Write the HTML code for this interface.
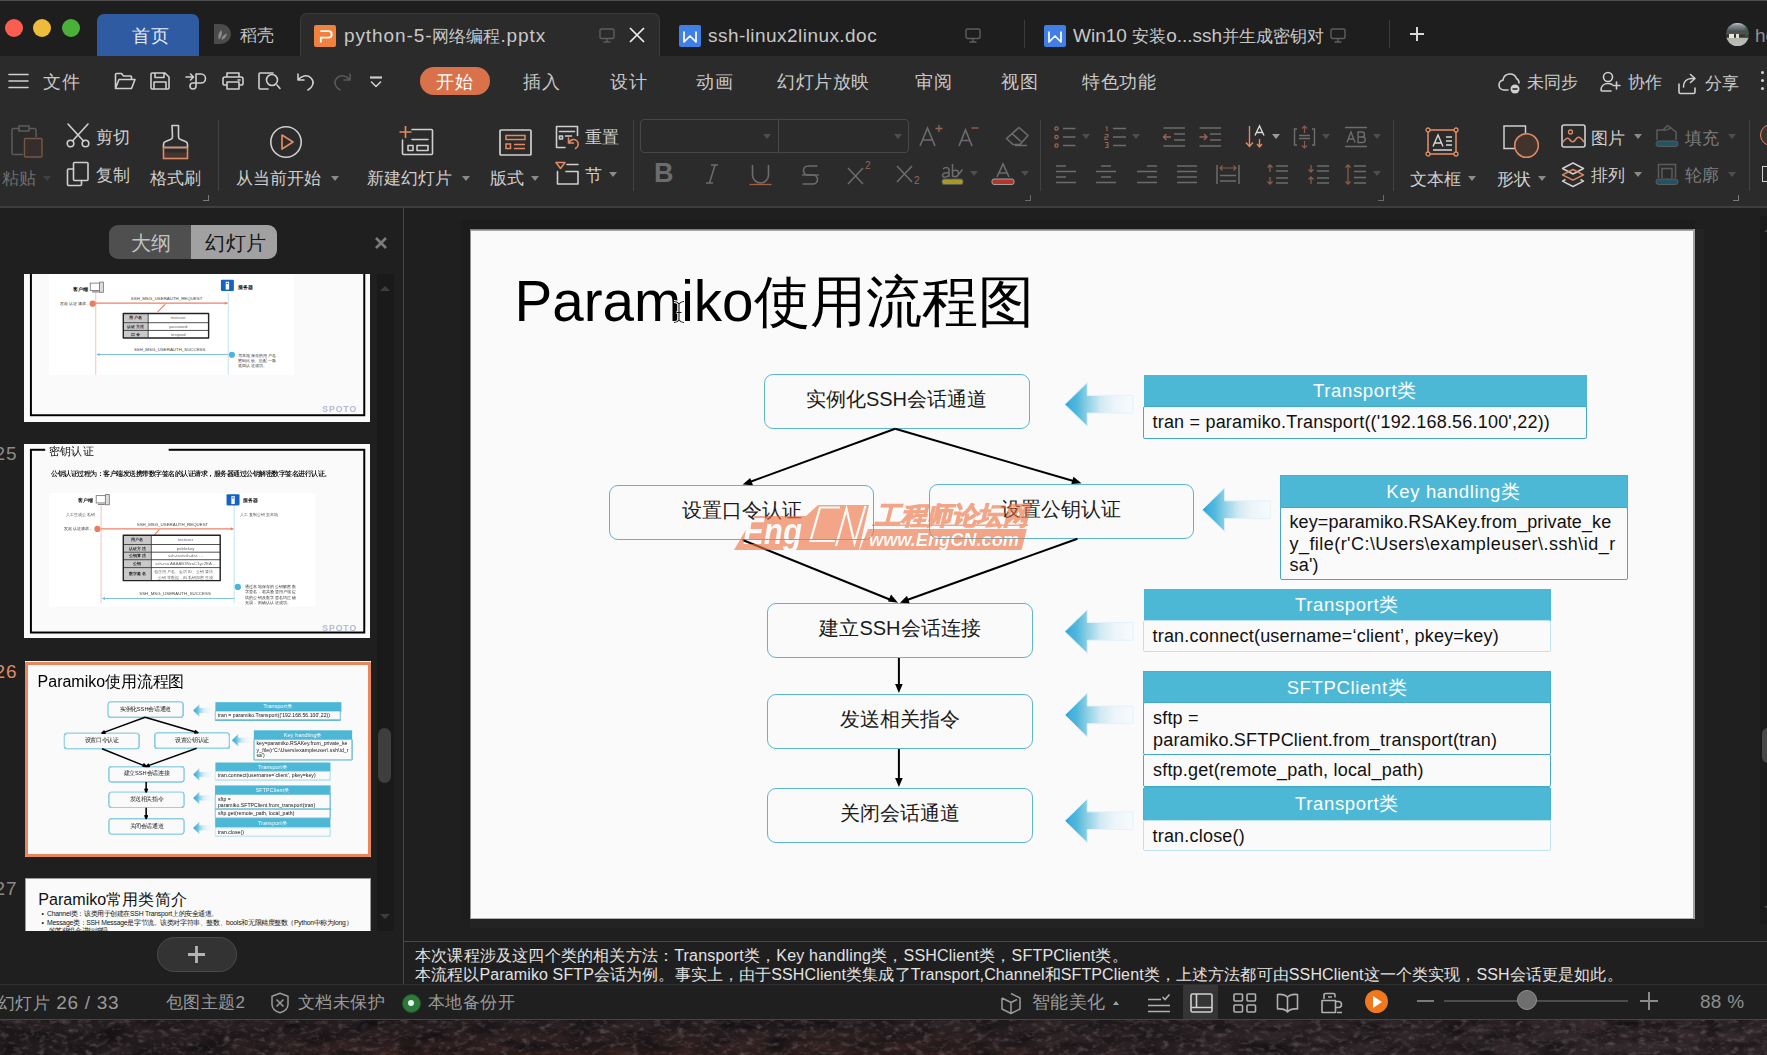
<!DOCTYPE html>
<html lang="zh">
<head>
<meta charset="utf-8">
<title>python-5-网络编程.pptx</title>
<style>
*{box-sizing:border-box;margin:0;padding:0}
html,body{width:1767px;height:1055px;overflow:hidden;background:#1f1f1f}
body{font-family:"Liberation Sans",sans-serif;color:#cfcfcf;position:relative}
.a{position:absolute}
.t{position:absolute;white-space:nowrap;line-height:1}
svg{position:absolute;overflow:visible}
.ic{fill:none;stroke:#cfcfcf;stroke-width:1.6;stroke-linecap:round;stroke-linejoin:round}
.dim{stroke:#585858}
.or{stroke:#e08a63}
/* ---------- tab bar ---------- */
#tabbar{left:0;top:0;width:1767px;height:56px;background:#1e1e1e}
#topline{left:0;top:0;width:1767px;height:1px;background:#4c4c4c}
.tl{width:18px;height:18px;border-radius:50%;top:19px}
#hometab{left:97px;top:14px;width:102px;height:42px;background:#2f5ba2;border-radius:7px 7px 0 0}
#doctab{left:300px;top:13px;width:360px;height:44px;background:#2b2b2b;border:1px solid #3b3b3b;border-bottom:none;border-radius:7px 7px 0 0}
.tabtxt{font-size:17px;color:#c8c8c8;top:27px}
.tabtxt b{font-weight:normal;font-size:19px;line-height:17px}
.vsep{width:1px;background:#3c3c3c}
/* ---------- menu bar ---------- */
#menubar{left:0;top:56px;width:1767px;height:52px;background:#2b2b2b}
.mi{font-size:18px;color:#c9c9c9;top:72.5px;letter-spacing:.5px}
#startpill{left:420px;top:67px;width:70px;height:28px;border-radius:14px;background:#d9724b}
/* ---------- ribbon ---------- */
#ribbon{left:0;top:108px;width:1767px;height:98px;background:#2b2b2b}
#ribline{left:0;top:206px;width:1767px;height:2px;background:#3e3e3e}
.rt{font-size:18.5px;color:#cfcfcf}
.rsep{width:1px;top:119.5px;height:71px;background:#424242}
.dd{width:0;height:0;border-left:4px solid transparent;border-right:4px solid transparent;border-top:5px solid #8a8a8a}
.ddd{border-top-color:#4e4e4e}
.cm{width:6px;height:6px;border-right:1.5px solid #7a7a7a;border-bottom:1.5px solid #7a7a7a}
/* ---------- left panel ---------- */
#left{left:0;top:208px;width:403px;height:777px;background:#1f1f1f}
#split{left:403px;top:208px;width:1px;height:777px;background:#484848}
.tw{width:346px;height:194.5px;overflow:hidden;background:#fafafa}
.ts{position:absolute;left:0;top:0;width:1225px;height:690px;transform-origin:0 0;transform:scale(.2825,.282)}
.spoto{font-size:31px;font-weight:bold;color:#b4bad6;letter-spacing:3px}
.t26 .fb{border-color:#4fb6d6;box-shadow:0 0 0 1.5px #4fb6d6,inset 0 0 0 1.5px #4fb6d6}
.t26 .tb{border-color:#3fa9cb;box-shadow:0 0 0 1.5px #3fa9cb,inset 0 0 0 1.5px #3fa9cb}
.t26 .tb.lt{border-color:#a9daeb;box-shadow:0 0 0 1.5px #a9daeb,inset 0 0 0 1.5px #a9daeb}
/* ---------- main ---------- */
#main{left:404px;top:208px;width:1363px;height:734px;background:#1f1f1f}
#slide{left:470px;top:229px;width:1224.5px;height:690.3px;background:#fafafa;overflow:hidden;box-shadow:4.5px 4.5px 0 4.5px #232323,-4.5px -4.5px 0 4.5px #1c1c1c}
/* ---------- slide content ---------- */
.sl{position:absolute;left:0;top:0;width:1225px;height:690px;color:#111}
.ttl{font-size:56.6px;color:#000}
.fb{border:1.6px solid #5cb6d3;border-radius:9px;background:#fafafa;text-align:center;font-size:20px;color:#1a1a1a;line-height:48.8px;white-space:nowrap}
.th{background:#4db8d6;color:#fff;font-size:18.5px;text-align:center;line-height:31px;white-space:nowrap;letter-spacing:.65px}
.tb{background:#fafafa;border:1.7px solid #44a8c7;border-radius:2px;color:#111;font-size:18px;line-height:30.5px;padding-left:9px;white-space:nowrap;letter-spacing:.2px}
.lt{border-color:#bfe2ef}
/* ---------- notes / status ---------- */
#notesline{left:404px;top:941px;width:1363px;height:1.6px;background:#464646}
#notes{left:404px;top:942px;width:1363px;height:42px;background:#1f1f1f}
#status{left:0;top:984px;width:1767px;height:36px;background:#1f1f1f;border-top:1px solid #303030;border-bottom:1px solid #444}
.st{font-size:18px;color:#9a9a9a;top:993px;letter-spacing:.4px}
#wall{left:0;top:1020px;width:1767px;height:35px;background:#2c2224}
</style>
</head>
<body>
<!-- TABBAR -->
<div id="tabbar" class="a"></div>
<div id="topline" class="a"></div>
<div class="a tl" style="left:5px;background:#fc5d51"></div>
<div class="a tl" style="left:33px;background:#ecbc3a"></div>
<div class="a tl" style="left:62px;background:#4bb03a"></div>
<div id="hometab" class="a"></div>
<div class="t" style="left:132px;top:26.5px;font-size:18px;color:#e6ecf6;letter-spacing:.5px">首页</div>
<svg style="left:213px;top:23px" width="20" height="22" viewBox="0 0 20 22"><path d="M1 1h7a10 10 0 0 1 0 20H1z" fill="#4b4b4b"/><path d="M6 16.500c-1.500-3.500-.5-7 2.500-9.500c1 3.500.5 6.500-2.500 9.500zM8.500 17c0-3 2-5.500 5.500-6.500c-.5 3.500-2.500 5.500-5.500 6.500z" fill="#8a8a8a"/></svg>
<div class="t tabtxt" style="left:240px;color:#c4c4c4;letter-spacing:0">稻壳</div>
<div id="doctab" class="a"></div>
<svg style="left:314px;top:25px" width="22" height="22" viewBox="0 0 22 22"><rect width="22" height="22" rx="2" fill="#f0813f"/><path d="M6.300 6.200h8.200a3.200 3.200 0 0 1 0 6.400H6.800v4.800" fill="none" stroke="#fff" stroke-width="1.800"/></svg>
<div class="t tabtxt" style="left:344px"><b style="letter-spacing:.9px">python-5-</b>网络编程<b style="letter-spacing:.9px">.pptx</b></div>
<svg style="left:599px;top:28px" width="16" height="15" viewBox="0 0 16 15"><rect x="1" y="1" width="14" height="9.5" rx="1.5" fill="none" stroke="#5e5e5e" stroke-width="1.4"/><path d="M8 10.5v3M4.5 14h7" stroke="#5e5e5e" stroke-width="1.4" fill="none"/></svg>
<svg style="left:629px;top:27px" width="16" height="16" viewBox="0 0 16 16"><path d="M1 1l14 14M15 1L1 15" stroke="#f0f0f0" stroke-width="1.7" fill="none"/></svg>
<svg style="left:679px;top:25px" width="22" height="22" viewBox="0 0 22 22"><rect width="22" height="22" rx="2" fill="#3f7fe6"/><path d="M5 6.500v10.500l6-6l6 6V6.500" fill="none" stroke="#fff" stroke-width="1.700" stroke-linejoin="round"/></svg>
<div class="t tabtxt" style="left:708px"><b style="letter-spacing:.45px">ssh-linux2linux.doc</b></div>
<svg style="left:965px;top:28px" width="16" height="15" viewBox="0 0 16 15"><rect x="1" y="1" width="14" height="9.5" rx="1.5" fill="none" stroke="#5e5e5e" stroke-width="1.4"/><path d="M8 10.5v3M4.5 14h7" stroke="#5e5e5e" stroke-width="1.4" fill="none"/></svg>
<div class="a vsep" style="left:1024px;top:20px;height:28px"></div>
<svg style="left:1044px;top:25px" width="22" height="22" viewBox="0 0 22 22"><rect width="22" height="22" rx="2" fill="#3f7fe6"/><path d="M5 6.500v10.500l6-6l6 6V6.500" fill="none" stroke="#fff" stroke-width="1.700" stroke-linejoin="round"/></svg>
<div class="t tabtxt" style="left:1073px"><b>Win10 </b>安装<b>o...ssh</b>并生成密钥对</div>
<svg style="left:1330px;top:28px" width="16" height="15" viewBox="0 0 16 15"><rect x="1" y="1" width="14" height="9.5" rx="1.5" fill="none" stroke="#5e5e5e" stroke-width="1.4"/><path d="M8 10.5v3M4.5 14h7" stroke="#5e5e5e" stroke-width="1.4" fill="none"/></svg>
<div class="a vsep" style="left:1389px;top:20px;height:28px"></div>
<svg style="left:1410px;top:27px" width="14" height="14" viewBox="0 0 14 14"><path d="M7 0v14M0 7h14" stroke="#d8d8d8" stroke-width="2" fill="none"/></svg>
<div class="a" style="left:1726px;top:22.500px;width:23px;height:23.500px;border-radius:50%;overflow:hidden;background:linear-gradient(#d0d4d6 0,#8c949a 10%,#5e666a 28%,#4a4c4a 36%,#55554f 48%,#2e2e2a 52%,#3a3a36 62%,#b4b4ae 66%,#c0c0ba 100%)"><div class="a" style="left:3px;top:11.500px;width:5px;height:3.500px;background:#e8e8e0"></div><div class="a" style="left:9.500px;top:11.500px;width:3px;height:3.500px;background:#e0e0d6"></div><div class="a" style="left:19px;top:4px;width:3px;height:11px;background:#3a5a4e;opacity:.8"></div></div>
<div class="t tabtxt" style="left:1755px;color:#909090"><b>he</b></div>
<!-- MENUBAR -->
<div id="menubar" class="a"></div>
<svg style="left:8px;top:73px" width="21" height="16" viewBox="0 0 21 16"><path class="ic" d="M1 1.5h19M1 8h19M1 14.5h19"/></svg>
<div class="t mi" style="left:43px">文件</div>
<svg style="left:113px;top:71px" width="24" height="20" viewBox="0 0 24 20"><path class="ic" d="M2.5 17.5V3.5a1 1 0 0 1 1-1h5l2 2.5h7a1 1 0 0 1 1 1v2.5M2.5 17.5l3.5-9h16l-3.5 9z"/></svg>
<svg style="left:149px;top:71px" width="22" height="20" viewBox="0 0 22 20"><path class="ic" d="M3 2h13l4 4v11a1 1 0 0 1-1 1H3a1 1 0 0 1-1-1V3a1 1 0 0 1 1-1zM6 2v4.5h9V2M5 18v-7h12v7"/></svg>
<svg style="left:185px;top:71px" width="23" height="22" viewBox="0 0 23 22"><path class="ic" d="M1 6h7M5.5 3l3 3l-3 3M11 15V3h5a4.5 4.5 0 0 1 0 9h-8a3 3 0 1 0 3 3"/></svg>
<svg style="left:221px;top:71px" width="24" height="20" viewBox="0 0 24 20"><path class="ic" d="M6 6V2h12v4M6 14H3.5A1.5 1.5 0 0 1 2 12.500V8a2 2 0 0 1 2-2h16a2 2 0 0 1 2 2v4.500a1.500 1.500 0 0 1-1.500 1.500H18M6 11h12v7H6zM17 9h2"/></svg>
<svg style="left:257px;top:71px" width="24" height="20" viewBox="0 0 24 20"><path class="ic" d="M11 18H3a1 1 0 0 1-1-1V3a1 1 0 0 1 1-1h13M20 14l3 3.500"/><circle class="ic" cx="15" cy="9" r="5.500"/></svg>
<svg style="left:296px;top:72px" width="20" height="19" viewBox="0 0 20 19"><path class="ic" d="M2 2v6h6M2 8c3-4 9-6 13-2s2 9-3 12"/></svg>
<svg style="left:332px;top:72px" width="20" height="19" viewBox="0 0 20 19"><path class="ic dim" d="M18 2v6h-6M18 8c-3-4-9-6-13-2s-2 9 3 12"/></svg>
<svg style="left:369px;top:76px" width="14" height="12" viewBox="0 0 14 12"><path class="ic" d="M2.500 6l4.500 4.500L11.500 6"/><path d="M1 1.500h12" stroke="#cfcfcf" stroke-width="2.200"/></svg>
<div id="startpill" class="a"></div>
<div class="t mi" style="left:436px;color:#fff">开始</div>
<div class="t mi" style="left:523px">插入</div>
<div class="t mi" style="left:610px">设计</div>
<div class="t mi" style="left:696px">动画</div>
<div class="t mi" style="left:777px">幻灯片放映</div>
<div class="t mi" style="left:915px">审阅</div>
<div class="t mi" style="left:1001px">视图</div>
<div class="t mi" style="left:1082px">特色功能</div>
<svg style="left:1497px;top:70px" width="25" height="25" viewBox="0 0 25 25"><path class="ic" d="M11 20H7a5 5 0 0 1-1-9.900A7 7 0 0 1 19.500 8.500A5 5 0 0 1 22 13"/><circle cx="18" cy="19" r="4.500" fill="#cfcfcf"/><path d="M15.500 19h5" stroke="#2b2b2b" stroke-width="1.600"/></svg>
<div class="t mi" style="left:1527px;top:74px;font-size:17px;letter-spacing:0">未同步</div>
<svg style="left:1599px;top:71px" width="22" height="22" viewBox="0 0 22 22"><circle class="ic" cx="9" cy="6" r="4.500"/><path class="ic" d="M12 20H3a1 1 0 0 1-1-1c0-4 3-6.500 7-6.500c1.500 0 3 .3 4 1M17.500 11v7M14 14.500h7"/></svg>
<div class="t mi" style="left:1628px;top:74px;font-size:17px;letter-spacing:0">协作</div>
<svg style="left:1677px;top:73px" width="21" height="22" viewBox="0 0 21 22"><path class="ic" d="M2 11v8a1.500 1.500 0 0 0 1.500 1.500h13A1.500 1.500 0 0 0 18 19v-4M6.500 14c0-5 3-8.500 8-8.500h3M13.500 1.500l4.500 4l-4.500 4"/></svg>
<div class="t mi" style="left:1705px;top:75px;font-size:17px;letter-spacing:0">分享</div>
<div class="a" style="left:1761px;top:71px;width:3px;height:3px;background:#cfcfcf;border-radius:50%;box-shadow:0 8px 0 #cfcfcf,0 16px 0 #cfcfcf"></div>
<!-- RIBBON -->
<div id="ribbon" class="a"></div>
<!-- paste group -->
<svg style="left:11px;top:125px" width="32" height="33" viewBox="0 0 32 33"><path d="M9 3.500H2.500a1.500 1.500 0 0 0-1.500 1.500v23a1.500 1.500 0 0 0 1.500 1.500H12M18 3.500h5.500A1.500 1.500 0 0 1 25 5v7M8 1h10v5H8z" fill="none" stroke="#5c5c5c" stroke-width="1.500"/><rect x="13.500" y="13.500" width="17.500" height="18.500" rx="1" fill="#352e2c" stroke="#785647" stroke-width="1.400"/></svg>
<div class="t rt" style="left:2px;top:170px;color:#6e6e6e;font-size:17px">粘贴</div>
<div class="a dd ddd" style="left:43px;top:175.500px;border-top-color:#404040"></div>
<svg style="left:66px;top:123px" width="24" height="25" viewBox="0 0 24 25"><path class="ic" d="M2 1l15.500 17M22 1L6.500 18"/><circle class="ic" cx="4.500" cy="20.500" r="3.300"/><circle class="ic" cx="19.500" cy="20.500" r="3.300"/></svg>
<div class="t rt" style="left:96px;top:129px;font-size:17px">剪切</div>
<svg style="left:66px;top:161px" width="24" height="26" viewBox="0 0 24 26"><rect class="ic" x="7.500" y="1.500" width="14.500" height="18" rx="1"/><path class="ic" d="M7.500 8H2.500a1 1 0 0 0-1 1v14.500a1 1 0 0 0 1 1h12a1 1 0 0 0 1-1V19.500"/></svg>
<div class="t rt" style="left:96px;top:167px;font-size:17px">复制</div>
<svg style="left:162px;top:124px" width="27" height="36" viewBox="0 0 27 36"><path class="ic" d="M10 1.500h6.500v11.500c0 1 .5 2 2 2.500l5 2c1.500.5 2 1.500 2 3v3H1.500v-3c0-1.500.5-2.500 2-3l5-2c1.500-.5 2-1.500 2-2.500z" stroke-width="1.500"/><rect x="1.500" y="28.500" width="24" height="6" fill="#43352f"/><rect x="1.500" y="23.500" width="24" height="11" fill="none" stroke="#e08a63" stroke-width="1.600"/></svg>
<div class="t rt" style="left:150px;top:170px;font-size:17px">格式刷</div>
<div class="a cm" style="left:203px;top:195px"></div>
<div class="a rsep" style="left:218px"></div>
<!-- play -->
<svg style="left:269px;top:125px" width="34" height="34" viewBox="0 0 34 34"><circle cx="17" cy="17" r="15.200" fill="none" stroke="#cfcfcf" stroke-width="1.600"/><path d="M13 10l11 7l-11 7z" fill="none" stroke="#e08a63" stroke-width="1.700" stroke-linejoin="round"/></svg>
<div class="t rt" style="left:236px;top:170px;font-size:17px">从当前开始</div>
<div class="a dd" style="left:331px;top:176px"></div>
<!-- new slide -->
<svg style="left:399px;top:126px" width="35" height="30" viewBox="0 0 35 30"><path class="ic" d="M13 3.500h19.500a1 1 0 0 1 1 1v23a1 1 0 0 1-1 1H4.500a1 1 0 0 1-1-1V14M9 19.500h5v5H9zM18 19.500h11v5H18zM13 13.500h16" stroke-width="1.500"/><path d="M6.500 0v12M.5 6h12" stroke="#e08a63" stroke-width="1.700" fill="none"/></svg>
<div class="t rt" style="left:367px;top:170px;font-size:17px">新建幻灯片</div>
<div class="a dd" style="left:462px;top:176px"></div>
<!-- layout -->
<svg style="left:499px;top:129px" width="33" height="27" viewBox="0 0 33 27"><rect x="1" y="1" width="31" height="25" rx="1" fill="none" stroke="#cfcfcf" stroke-width="1.700"/><path d="M7 6.500h19v4H7zM7 15h4.500v4.500H7zM15 15.500h11M15 19.500h11" fill="none" stroke="#e08a63" stroke-width="1.500"/></svg>
<div class="t rt" style="left:490px;top:170px;font-size:17px">版式</div>
<div class="a dd" style="left:531px;top:176px"></div>
<!-- reset / section -->
<svg style="left:555px;top:125px" width="25" height="25" viewBox="0 0 25 25"><path class="ic" d="M10 22.500H1.500v-21H22.500v9M4.500 6.500h15M4.500 11h3v3h-3zM10.500 11h6" stroke-width="1.500"/><path d="M13.500 13v5h5M14 17.500c1.500-3 5-4 7.500-2s2.500 6-1 8" fill="none" stroke="#e08a63" stroke-width="1.600" stroke-linecap="round"/></svg>
<div class="t rt" style="left:585px;top:129px;font-size:17px">重置</div>
<svg style="left:555px;top:161px" width="25" height="25" viewBox="0 0 25 25"><path class="ic" d="M12 3.500h11M2.500 10.500v12.500h20.500V10.500H11" stroke-width="1.600"/><path d="M1 1.500h9l-4.500 6z" fill="none" stroke="#e08a63" stroke-width="1.500" stroke-linejoin="round"/></svg>
<div class="t rt" style="left:585px;top:167px;font-size:17px">节</div>
<div class="a dd" style="left:609px;top:172px"></div>
<div class="a rsep" style="left:633px"></div>
<!-- font group -->
<div class="a" style="left:640px;top:119px;width:139px;height:34px;border:1.5px solid #474747;border-radius:4px 0 0 4px"></div>
<div class="a" style="left:778px;top:119px;width:131px;height:34px;border:1.5px solid #474747;border-radius:0 4px 4px 0"></div>
<div class="a dd ddd" style="left:763px;top:134px"></div>
<div class="a dd ddd" style="left:894px;top:134px"></div>
<svg style="left:919px;top:125px" width="24" height="22" viewBox="0 0 24 22"><path d="M1 21L8.500 3L16 21M3.500 15h10" fill="none" stroke="#6c6c6c" stroke-width="1.600"/><path d="M20 0v7M16.500 3.500h7" stroke="#9a6650" stroke-width="1.300"/></svg>
<svg style="left:958px;top:125px" width="22" height="22" viewBox="0 0 22 22"><path d="M1 21L7.500 5L14 21M3.200 15.500h8.600" fill="none" stroke="#6c6c6c" stroke-width="1.600"/><path d="M13.500 3h7" stroke="#9a6650" stroke-width="1.300"/></svg>
<svg style="left:1005px;top:126px" width="25" height="21" viewBox="0 0 25 21"><path d="M14 1.500l9 8l-8 9H8l-6.500-6zM7 7.500l9 8M10 19.500h12" fill="none" stroke="#6c6c6c" stroke-width="1.600" stroke-linejoin="round"/></svg>
<div class="t" style="left:654px;top:160px;font-size:27px;font-weight:bold;color:#6c6c6c">B</div>
<svg style="left:705px;top:164px" width="14" height="20" viewBox="0 0 14 20"><path d="M6 1h7M1 19h7M10 1L4.500 19" stroke="#6c6c6c" stroke-width="1.500" fill="none"/></svg>
<svg style="left:749px;top:164px" width="23" height="22" viewBox="0 0 23 22"><path d="M3.500 1v10a8 8 0 0 0 16 0V1" stroke="#6c6c6c" stroke-width="1.600" fill="none"/><path d="M.5 20.500h22" stroke="#a85e44" stroke-width="1.300"/></svg>
<svg style="left:801px;top:164px" width="19" height="22" viewBox="0 0 19 22"><path d="M16.500 2H7a4.500 4.500 0 0 0 0 9h5a4.500 4.500 0 0 1 0 9H1.500" stroke="#6c6c6c" stroke-width="1.600" fill="none"/><path d="M1 11h17" stroke="#6c6c6c" stroke-width="1.300"/></svg>
<svg style="left:847px;top:163px" width="25" height="22" viewBox="0 0 25 22"><path d="M1 5l15 16M16 5L1 21" stroke="#6c6c6c" stroke-width="1.600" fill="none"/></svg>
<div class="t" style="left:865px;top:161px;font-size:10px;color:#9a6650">2</div>
<svg style="left:896px;top:163px" width="25" height="22" viewBox="0 0 25 22"><path d="M1 3l15 16M16 3L1 19" stroke="#6c6c6c" stroke-width="1.600" fill="none"/></svg>
<div class="t" style="left:914px;top:176px;font-size:10px;color:#9a6650">2</div>
<svg style="left:941px;top:163px" width="24" height="23" viewBox="0 0 24 23"><path d="M2 6c2-2 6-2 6 1v7M8 10c-4-.5-6.500.5-6.500 2.500s4 2.500 6.500-.5M11.500 1v13M11.500 9c1-2.500 6-2.500 6 1s-5 5-6 2M21.500 6.500l-6 7.500" stroke="#6c6c6c" stroke-width="1.500" fill="none"/><rect x="1" y="16" width="21" height="5.500" rx="2" fill="#a79a20" stroke="#5a5a5a" stroke-width="1"/></svg>
<div class="a dd ddd" style="left:970px;top:171px"></div>
<svg style="left:991px;top:163px" width="24" height="23" viewBox="0 0 24 23"><path d="M6 14L12 1l6 13M8 10h8" stroke="#6c6c6c" stroke-width="1.600" fill="none"/><rect x="1" y="16" width="22" height="5.500" rx="2" fill="#b5352a" stroke="#a0a0a0" stroke-width="1"/></svg>
<div class="a dd ddd" style="left:1021px;top:171px"></div>
<div class="a cm" style="left:1024.5px;top:195px;border-color:#6a6a6a"></div>
<div class="a rsep" style="left:1040px"></div>
<!-- paragraph group -->
<svg style="left:1054px;top:126px" width="24" height="22" viewBox="0 0 24 22"><path d="M9 2.500h12.500M9 11h12.500M9 19.500h12.500" stroke="#6c6c6c" stroke-width="1.500"/><g fill="none" stroke="#9a6650" stroke-width="1.200"><circle cx="2.500" cy="2.500" r="1.700"/><circle cx="2.500" cy="11" r="1.700"/><circle cx="2.500" cy="19.500" r="1.700"/></g></svg>
<div class="a dd ddd" style="left:1082px;top:134px"></div>
<svg style="left:1104px;top:126px" width="24" height="22" viewBox="0 0 24 22"><path d="M9 2.500h13M9 11h13M9 19.500h13" stroke="#6c6c6c" stroke-width="1.500"/><path d="M1.500 1h1.500v4M1 8.500h3v2.500H1v2.500h3M1 16.500h3v5H1M2 19h2" stroke="#9a6650" stroke-width="1.100" fill="none"/></svg>
<div class="a dd ddd" style="left:1132px;top:134px"></div>
<svg style="left:1162px;top:126px" width="24" height="22" viewBox="0 0 24 22"><path d="M1.500 2h21.500M12 8h11M12 14h11M1.500 20h21.500" stroke="#6c6c6c" stroke-width="1.500"/><path d="M9 11H1.500M4.500 8l-3 3l3 3" stroke="#9a6650" stroke-width="1.300" fill="none"/></svg>
<svg style="left:1198px;top:126px" width="24" height="22" viewBox="0 0 24 22"><path d="M1.500 2h21.500M12 8h11M12 14h11M1.500 20h21.500" stroke="#6c6c6c" stroke-width="1.500"/><path d="M1.500 11H9M6 8l3 3l-3 3" stroke="#9a6650" stroke-width="1.300" fill="none"/></svg>
<svg style="left:1245px;top:125px" width="21" height="23" viewBox="0 0 21 23"><path d="M4.500 1v20M1 17.500l3.500 4l3.500-4M14.500 14v8M12 19l2.500 3l2.500-3" stroke="#e08a63" stroke-width="1.400" fill="none"/><path d="M10 10.500L14.500 1L19 10.500M11.500 7.500h6" stroke="#d8d8d8" stroke-width="1.400" fill="none"/></svg>
<div class="a dd" style="left:1272px;top:134px;border-top-color:#9a9a9a"></div>
<svg style="left:1293px;top:125px" width="23" height="24" viewBox="0 0 23 24"><path d="M4 4H1.500v16H4M19 4h2.500v16H19M6 10.500h11M6 13.500h11" stroke="#6c6c6c" stroke-width="1.400" fill="none"/><path d="M11.500 1v7M9 3.500L11.500 1L14 3.500M11.500 23v-7M9 20.500l2.500 2.500l2.500-2.500" stroke="#8a5c49" stroke-width="1.200" fill="none"/></svg>
<div class="a dd ddd" style="left:1322px;top:134px"></div>
<svg style="left:1344px;top:126px" width="24" height="22" viewBox="0 0 24 22"><path d="M1 1.500h22M1 20.500h22" stroke="#6c6c6c" stroke-width="1.300"/><path d="M3 16.500L7 6l4 10.500M4.500 13h5M14 6h4a2.500 2.500 0 0 1 0 5h-4zM14 11h4.500a2.700 2.700 0 0 1 0 5.500H14z" stroke="#6c6c6c" stroke-width="1.400" fill="none"/></svg>
<div class="a dd ddd" style="left:1373px;top:134px"></div>
<!-- row 2 -->
<svg style="left:1056px;top:165px" width="21" height="19" viewBox="0 0 21 19"><path d="M0 1h10M0 6.500h20M0 12h10M0 17.500h20" stroke="#6c6c6c" stroke-width="1.500"/></svg>
<svg style="left:1096px;top:165px" width="21" height="19" viewBox="0 0 21 19"><path d="M5 1h10M0 6.500h20M5 12h10M0 17.500h20" stroke="#6c6c6c" stroke-width="1.500"/></svg>
<svg style="left:1137px;top:165px" width="21" height="19" viewBox="0 0 21 19"><path d="M10 1h10M0 6.500h20M10 12h10M0 17.500h20" stroke="#6c6c6c" stroke-width="1.500"/></svg>
<svg style="left:1177px;top:165px" width="21" height="19" viewBox="0 0 21 19"><path d="M0 1h20M0 6.500h20M0 12h20M0 17.500h20" stroke="#6c6c6c" stroke-width="1.500"/></svg>
<svg style="left:1216px;top:164px" width="24" height="21" viewBox="0 0 24 21"><path d="M1 1v19M23 1v19M4 11.500h16M4 17h16" stroke="#6c6c6c" stroke-width="1.500"/><path d="M4 4h16M6.500 1.500L4 4l2.500 2.500M17.500 1.500L20 4l-2.500 2.500" stroke="#8a5c49" stroke-width="1.200" fill="none"/></svg>
<svg style="left:1266px;top:164px" width="23" height="21" viewBox="0 0 23 21"><path d="M10 2h12M10 7h12M10 14h12M10 19h12" stroke="#6c6c6c" stroke-width="1.500"/><path d="M4 8V1M1.500 3.500L4 1l2.500 2.500M4 13v7M1.500 17.500L4 20l2.500-2.500" stroke="#8a5c49" stroke-width="1.300" fill="none"/></svg>
<svg style="left:1307px;top:164px" width="23" height="21" viewBox="0 0 23 21"><path d="M10 2h12M10 7h12M10 14h12M10 19h12" stroke="#6c6c6c" stroke-width="1.500"/><path d="M4 1v7M1.500 5.500L4 8l2.500-2.500M4 20v-7M1.500 15.500L4 13l2.500 2.500" stroke="#8a5c49" stroke-width="1.300" fill="none"/></svg>
<svg style="left:1344px;top:164px" width="23" height="21" viewBox="0 0 23 21"><path d="M10 2h12M10 7.500h12M10 13.500h12M10 19h12" stroke="#6c6c6c" stroke-width="1.500"/><path d="M4 1v19M1.500 3.500L4 1l2.500 2.500M1.500 17.500L4 20l2.500-2.500" stroke="#8a5c49" stroke-width="1.300" fill="none"/></svg>
<div class="a dd ddd" style="left:1373px;top:171px"></div>
<div class="a cm" style="left:1377.5px;top:195px;border-color:#6a6a6a"></div>
<div class="a rsep" style="left:1393px"></div>
<!-- insert group -->
<svg style="left:1425px;top:127px" width="34" height="30" viewBox="0 0 34 30"><rect x="3" y="3" width="28" height="24" fill="none" stroke="#e08a63" stroke-width="1.600"/><g fill="#2b2b2b" stroke="#e08a63" stroke-width="1.300"><circle cx="3" cy="3" r="2"/><circle cx="31" cy="3" r="2"/><circle cx="3" cy="27" r="2"/><circle cx="31" cy="27" r="2"/></g><path d="M8 19.500L13 8l5 11.500M9.500 16h7M21 10h6M21 14h6M21 18h6M8 23h19" stroke="#d8d8d8" stroke-width="1.400" fill="none"/></svg>
<div class="t rt" style="left:1410px;top:171px;font-size:17px">文本框</div>
<div class="a dd" style="left:1468px;top:176px"></div>
<svg style="left:1503px;top:125px" width="37" height="34" viewBox="0 0 37 34"><rect x="1" y="1" width="21.500" height="22.500" fill="none" stroke="#cfcfcf" stroke-width="1.500"/><circle cx="23.500" cy="20.500" r="11.800" fill="#41342f" stroke="#e08a63" stroke-width="1.600"/></svg>
<div class="t rt" style="left:1497px;top:171px;font-size:17px">形状</div>
<div class="a dd" style="left:1538px;top:176px"></div>
<svg style="left:1561px;top:124px" width="25" height="24" viewBox="0 0 25 24"><rect x="1" y="1" width="23" height="22" rx="2" fill="none" stroke="#cfcfcf" stroke-width="1.600"/><circle cx="9.500" cy="8" r="2" fill="none" stroke="#e08a63" stroke-width="1.300"/><path d="M2 18c3-4 5-5 7-2s4 2 6-1s5-2 8 3" fill="none" stroke="#e08a63" stroke-width="1.500"/></svg>
<div class="t rt" style="left:1591px;top:130px;font-size:17px">图片</div>
<div class="a dd" style="left:1634px;top:134px"></div>
<svg style="left:1561px;top:162px" width="24" height="26" viewBox="0 0 24 26"><path d="M12 1l10.500 5.500L12 12L1.500 6.500zM4.500 17.500l-3 1.700L12 24.500l10.500-5.300l-3-1.700" fill="none" stroke="#cfcfcf" stroke-width="1.500" stroke-linejoin="round"/><path d="M12 7.500l10.500 5.300L12 18.200L1.500 12.800z" fill="none" stroke="#e08a63" stroke-width="1.500" stroke-linejoin="round"/></svg>
<div class="t rt" style="left:1591px;top:167px;font-size:17px">排列</div>
<div class="a dd" style="left:1634px;top:172px"></div>
<svg style="left:1655px;top:124px" width="24" height="24" viewBox="0 0 24 24"><path d="M2 16V6h6l4.500-4.500L21 8v8M8 6c3 .5 6-.5 8.500-3" fill="none" stroke="#5c5c5c" stroke-width="1.500" stroke-linejoin="round"/><rect x="1" y="17" width="22" height="5.500" rx="2.500" fill="#1f5565" stroke="#5c5c5c" stroke-width="1"/></svg>
<div class="t rt" style="left:1685px;top:130px;font-size:17px;color:#7c7c7c">填充</div>
<div class="a dd ddd" style="left:1728px;top:134px"></div>
<svg style="left:1655px;top:163px" width="24" height="23" viewBox="0 0 24 23"><path d="M3.500 15V1.500h17V15M7 15V5.500h10V15" fill="none" stroke="#5c5c5c" stroke-width="1.500"/><rect x="1" y="16" width="22" height="5.500" rx="2.500" fill="#1f5565" stroke="#5c5c5c" stroke-width="1"/></svg>
<div class="t rt" style="left:1685px;top:167px;font-size:17px;color:#7c7c7c">轮廓</div>
<div class="a dd ddd" style="left:1728px;top:172px"></div>
<div class="a cm" style="left:1732.5px;top:195px"></div>
<div class="a rsep" style="left:1749px"></div>
<div class="a" style="left:1760px;top:124px;width:22px;height:22px;border-radius:50%;border:1.600px solid #e08a63;background:#41342f"></div>
<div class="a" style="left:1762px;top:166px;width:20px;height:16px;border:1.600px solid #cfcfcf"></div>
<div id="ribline" class="a"></div>
<!-- LEFT -->
<div id="left" class="a"></div>
<div class="a" style="left:109px;top:225px;width:83px;height:34px;background:#4f4f4f;border-radius:9px 0 0 9px"></div>
<div class="a" style="left:191px;top:225px;width:86px;height:34px;background:#a1a1a1;border-radius:0 9px 9px 0"></div>
<div class="t" style="left:131px;top:234px;font-size:19.500px;color:#c2c2c2">大纲</div>
<div class="t" style="left:205px;top:234px;font-size:19.500px;color:#161616;letter-spacing:.5px">幻灯片</div>
<svg style="left:375px;top:237px" width="12" height="12" viewBox="0 0 12 12"><path d="M1 1l10 10M11 1L1 11" stroke="#7c7c7c" stroke-width="2.600" fill="none"/></svg>
<!-- scroll track -->
<div class="a" style="left:377px;top:274px;width:17px;height:657px;background:#1a1a1a"></div>
<div class="a" style="left:380px;top:286px;width:0;height:0;border-left:5.500px solid transparent;border-right:5.500px solid transparent;border-bottom:5.500px solid #3d3d3d"></div>
<div class="a" style="left:380px;top:914px;width:0;height:0;border-left:5.500px solid transparent;border-right:5.500px solid transparent;border-top:5.500px solid #3d3d3d"></div>
<div class="a" style="left:378px;top:728px;width:13px;height:55px;background:#3e3e3e;border-radius:6.500px"></div>
<!-- thumbnails clip -->
<div class="a" style="left:0;top:274px;width:376px;height:657px;overflow:hidden">
 <!-- 24 -->
 <div class="a tw" style="left:24px;top:-46.600px"><div class="ts">
  <div class="a" style="left:88px;top:60px;width:868px;height:465px;background:#fff"></div>
  <div class="a" style="left:21px;top:-20px;width:1187px;height:691px;border:7px solid #000"></div>
  <!--D24--><svg style="left:0;top:0" width="1225" height="690" viewBox="0 0 1225 690"><path d="M254 232V523" stroke="#f3b9a9" stroke-width="3"/><path d="M723 232V523" stroke="#b9dfee" stroke-width="3"/><path d="M254 270H715" stroke="#ee8068" stroke-width="4"/><path d="M723 270l-12-6v12z" fill="#ee8068"/><path d="M500 274L473 301" stroke="#ee8068" stroke-width="4"/><path d="M264 452H723" stroke="#7cc4e2" stroke-width="4"/><path d="M256 452l12-6v12z" fill="#7cc4e2"/></svg>
<svg style="left:233px;top:194px" width="50" height="40" viewBox="0 0 50 40"><rect x="1.5" y="5" width="34" height="26" fill="#fff" stroke="#777" stroke-width="3"/><rect x="34" y="1.5" width="14" height="36" fill="#ddd" stroke="#777" stroke-width="3"/><path d="M8 36h24" stroke="#777" stroke-width="4"/></svg>
<svg style="left:697px;top:187px" width="46" height="40" viewBox="0 0 46 40"><rect width="46" height="40" rx="4" fill="#1565c0"/><rect x="17" y="7" width="12" height="28" fill="#fff"/><rect x="20" y="11" width="6" height="4" fill="#1565c0"/></svg>
<div class="t" style="left:172px;top:213px;font-size:17.5px;color:#111;font-weight:bold">客户端</div>
<div class="t" style="left:757px;top:207px;font-size:17.5px;color:#111;font-weight:bold">服务器</div>
<div class="t" style="left:378px;top:246px;font-size:15.5px;color:#444">SSH_MSG_USERAUTH_REQUEST</div>
<div class="t" style="left:127px;top:264px;font-size:15.5px;color:#333">发起认证请求。</div>
<div class="a" style="left:232px;top:261px;width:22px;height:22px;border-radius:50%;background:#ee7a60"></div>
<div class="a" style="left:352px;top:307px;width:87px;height:86px;background:#c9c9c9"></div>
<div class="a" style="left:439px;top:307px;width:214px;height:86px;background:#fff"></div>
<div class="t" style="left:352px;top:307px;width:87px;height:32px;line-height:32px;text-align:center;font-size:15px;font-weight:bold;color:#222">用户名</div>
<div class="t" style="left:439px;top:307px;width:214px;height:32px;line-height:32px;text-align:center;font-size:15px;color:#666">testuser</div>
<div class="t" style="left:352px;top:339px;width:87px;height:27px;line-height:27px;text-align:center;font-size:15px;font-weight:bold;color:#222">认证方法</div>
<div class="t" style="left:439px;top:339px;width:214px;height:27px;line-height:27px;text-align:center;font-size:15px;color:#666">password</div>
<div class="t" style="left:352px;top:366px;width:87px;height:27px;line-height:27px;text-align:center;font-size:15px;font-weight:bold;color:#222">口令</div>
<div class="t" style="left:439px;top:366px;width:214px;height:27px;line-height:27px;text-align:center;font-size:15px;color:#666">testpwd</div>
<div class="a" style="left:352px;top:337.5px;width:301px;height:3px;background:#333"></div>
<div class="a" style="left:352px;top:364.5px;width:301px;height:3px;background:#333"></div>
<div class="a" style="left:437.5px;top:307px;width:3px;height:86px;background:#333"></div>
<div class="a" style="left:349px;top:304px;width:307px;height:92px;border:5px solid #222;border-radius:3px"></div>
<div class="t" style="left:389px;top:427px;font-size:15.5px;color:#444">SSH_MSG_USERAUTH_SUCCESS</div>
<div class="a" style="left:725px;top:442px;width:22px;height:22px;border-radius:50%;background:#4fb4dc"></div>
<div class="t" style="left:757px;top:447px;font-size:15px;color:#333">与本地保存的用户名</div>
<div class="t" style="left:757px;top:466px;font-size:15px;color:#333">密码比较。匹配一致</div>
<div class="t" style="left:757px;top:485px;font-size:15px;color:#333">返回认证成功。</div><!--/D24-->
  <div class="t spoto" style="left:1056px;top:630px">SPOTO</div>
 </div></div>
 <!-- 25 -->
 <div class="a tw" style="left:24px;top:169.800px"><div class="ts">
  <div class="a" style="left:88px;top:174px;width:944px;height:403px;background:#fff"></div>
  <div class="a" style="left:21px;top:17px;width:1187px;height:655px;border:7px solid #000"></div>
  <div class="a" style="left:75px;top:10px;width:437px;height:20px;background:#fafafa"></div>
  <div class="t" style="left:88px;top:6px;font-size:40px;color:#111">密钥认证</div>
  <div class="t" style="left:97px;top:95px;font-size:23.300px;color:#111;font-weight:bold">公钥认证过程为：客户端发送携带数字签名的认证请求，服务器通过公钥解密数字签名进行认证。</div>
  <!--D25--><svg style="left:0;top:0" width="1225" height="690" viewBox="0 0 1225 690"><path d="M273 217V565" stroke="#f3b9a9" stroke-width="3"/><path d="M744 217V565" stroke="#b9dfee" stroke-width="3"/><path d="M273 301H736" stroke="#ee8068" stroke-width="4"/><path d="M744 301l-12-6v12z" fill="#ee8068"/><path d="M479 304L462 322" stroke="#ee8068" stroke-width="4"/><path d="M283 548H744" stroke="#7cc4e2" stroke-width="4"/><path d="M275 548l12-6v12z" fill="#7cc4e2"/></svg>
<svg style="left:254px;top:178px" width="50" height="40" viewBox="0 0 50 40"><rect x="1.5" y="5" width="34" height="26" fill="#fff" stroke="#777" stroke-width="3"/><rect x="34" y="1.5" width="14" height="36" fill="#ddd" stroke="#777" stroke-width="3"/><path d="M8 36h24" stroke="#777" stroke-width="4"/></svg>
<svg style="left:717px;top:178px" width="46" height="40" viewBox="0 0 46 40"><rect width="46" height="40" rx="4" fill="#1565c0"/><rect x="17" y="7" width="12" height="28" fill="#fff"/><rect x="20" y="11" width="6" height="4" fill="#1565c0"/></svg>
<div class="t" style="left:191px;top:192px;font-size:17.5px;color:#111;font-weight:bold">客户端</div>
<div class="t" style="left:776px;top:192px;font-size:17.5px;color:#111;font-weight:bold">服务器</div>
<div class="t" style="left:147px;top:242px;font-size:15px;color:#555">人工生成公私钥</div>
<div class="t" style="left:765px;top:242px;font-size:15px;color:#555">人工复制公钥至本地</div>
<div class="t" style="left:142px;top:293px;font-size:15px;color:#333">发起认证请求。</div>
<div class="a" style="left:249px;top:290px;width:22px;height:22px;border-radius:50%;background:#ee7a60"></div>
<div class="t" style="left:399px;top:279px;font-size:15.5px;color:#444">SSH_MSG_USERAUTH_REQUEST</div>
<div class="a" style="left:352px;top:324px;width:98px;height:160px;background:#c9c9c9"></div>
<div class="a" style="left:450px;top:324px;width:244px;height:160px;background:#fff"></div>
<div class="t" style="left:352px;top:324px;width:98px;height:32px;line-height:32px;text-align:center;font-size:15px;font-weight:bold;color:#222">用户名</div>
<div class="t" style="left:450px;top:324px;width:244px;height:32px;line-height:32px;text-align:center;font-size:15px;color:#666">testuser</div>
<div class="t" style="left:352px;top:356px;width:98px;height:27px;line-height:27px;text-align:center;font-size:15px;font-weight:bold;color:#222">认证方法</div>
<div class="t" style="left:450px;top:356px;width:244px;height:27px;line-height:27px;text-align:center;font-size:15px;color:#666">publickey</div>
<div class="t" style="left:352px;top:383px;width:98px;height:27px;line-height:27px;text-align:center;font-size:15px;font-weight:bold;color:#222">公钥算法</div>
<div class="t" style="left:450px;top:383px;width:244px;height:27px;line-height:27px;text-align:center;font-size:15px;color:#666">ssh-rsa/ssh-dss …</div>
<div class="t" style="left:352px;top:410px;width:98px;height:28px;line-height:28px;text-align:center;font-size:15px;font-weight:bold;color:#222">公钥</div>
<div class="t" style="left:450px;top:410px;width:244px;height:28px;line-height:28px;text-align:center;font-size:15px;color:#666">ssh-rsa AAAAB3NzaC1yc2EA…</div>
<div class="t" style="left:352px;top:438px;width:98px;height:46px;line-height:46px;text-align:center;font-size:15px;font-weight:bold;color:#222">数字签名</div>
<div class="t" style="left:450px;top:441px;width:244px;line-height:21px;text-align:center;font-size:15px;color:#666">包含用户名、会话ID、公钥算法、<br>公钥等数据，由私钥加密生成</div>
<div class="a" style="left:352px;top:354.5px;width:342px;height:3px;background:#333"></div>
<div class="a" style="left:352px;top:381.5px;width:342px;height:3px;background:#333"></div>
<div class="a" style="left:352px;top:408.5px;width:342px;height:3px;background:#333"></div>
<div class="a" style="left:352px;top:436.5px;width:342px;height:3px;background:#333"></div>
<div class="a" style="left:448.5px;top:324px;width:3px;height:160px;background:#333"></div>
<div class="a" style="left:349px;top:321px;width:348px;height:166px;border:5px solid #222;border-radius:3px"></div>
<div class="t" style="left:408px;top:523px;font-size:15.5px;color:#444">SSH_MSG_USERAUTH_SUCCESS</div>
<div class="a" style="left:746px;top:496px;width:22px;height:22px;border-radius:50%;background:#4fb4dc"></div>
<div class="t" style="left:782px;top:499px;font-size:14.5px;color:#333">通过本地保存的公钥解密数</div>
<div class="t" style="left:782px;top:518px;font-size:14.5px;color:#333">字签名，若其验签用户端提</div>
<div class="t" style="left:782px;top:537px;font-size:14.5px;color:#333">供的公钥及数字签名均正确</div>
<div class="t" style="left:782px;top:556px;font-size:14.5px;color:#333">无误，则确认认证成功。</div><!--/D25-->
  <div class="t spoto" style="left:1056px;top:636px">SPOTO</div>
 </div></div>
 <!-- 26 -->
 <div class="a tw" style="left:24.500px;top:387.300px;height:195.400px"><div class="ts t26">
<div class="sl">
<div class="t ttl" style="left:44.500px;top:44.700px">Paramiko<span style="font-size:56px">使用流程图</span></div>
<div class="a fb" style="left:293.500px;top:145px;width:266px;height:55px"><span>实例化SSH会话通道</span></div>
<div class="a fb" style="left:139px;top:256px;width:265px;height:55px"><span>设置口令认证</span></div>
<div class="a fb" style="left:458.500px;top:254.500px;width:265px;height:55px"><span>设置公钥认证</span></div>
<div class="a fb" style="left:297px;top:374px;width:266px;height:55px"><span>建立SSH会话连接</span></div>
<div class="a fb" style="left:297px;top:464.500px;width:266px;height:55px"><span>发送相关指令</span></div>
<div class="a fb" style="left:297px;top:558.500px;width:266px;height:55px"><span>关闭会话通道</span></div>
<svg style="left:0;top:0" width="1225" height="690" viewBox="0 0 1225 690">
<g stroke="#000" stroke-width="5.500" fill="none">
<path d="M425.200 199.800L277 254"/><path d="M425.200 199.800L606 252.800"/>
<path d="M272.700 311L421 371"/><path d="M607.500 309.700L437 371"/>
<path d="M428.900 429v29"/><path d="M428.900 520v32"/>
</g>
<g fill="#000" stroke="#000" stroke-width="6" stroke-linejoin="round">
<path d="M272.700 255.500l7.500-6.500l2.800 7.200z"/><path d="M611.500 254.300l-10.200.8l2.200-7.400z"/>
<path d="M428 373.800l-10-1.200l3-7.200z"/><path d="M430 373.800l7-7l2.600 7.400z"/>
<path d="M428.900 464l-3.800-9h7.600z"/><path d="M428.900 558l-3.800-9h7.600z"/>
</g>
<defs>
<linearGradient id="ag2" x1="0" x2="1" y1="0" y2="0"><stop offset="0" stop-color="#1e9be0"/><stop offset=".07" stop-color="#3eaee0"/><stop offset=".18" stop-color="#52b8dc"/><stop offset=".33" stop-color="#8dcfe4"/><stop offset=".53" stop-color="#d2eaf3"/><stop offset=".73" stop-color="#ecf5f9"/><stop offset="1" stop-color="#f7fbfd"/></linearGradient>
<path id="ar2" d="M0 22L22.500 0v13H68v17.700H22.500V44z" stroke="#e4f2f9" stroke-width="1"/>
</defs>
<use href="#ar2" x="594.800" y="153.400" fill="url(#ag2)"/>
<use href="#ar2" x="732.200" y="258.800" fill="url(#ag2)"/>
<use href="#ar2" x="594.800" y="380.500" fill="url(#ag2)"/>
<use href="#ar2" x="594.800" y="464" fill="url(#ag2)"/>
<use href="#ar2" x="594.800" y="569.800" fill="url(#ag2)"/>
</svg>
<!-- tables -->
<div class="a th" style="left:673.500px;top:146px;width:443px;height:32px">Transport类</div>
<div class="a tb" style="left:672.500px;top:177px;width:444px;height:32.500px">tran = paramiko.Transport(('192.168.56.100',22))</div>
<div class="a th" style="left:809.500px;top:245.500px;width:348px;height:34px;border:1.500px solid #43b0d2">Key handling类</div>
<div class="a tb" style="left:809.500px;top:278px;width:348px;height:73px;line-height:21.600px;padding-top:4.200px"><span style="letter-spacing:.1px">key=paramiko.RSAKey.from_private_ke</span><br><span style="letter-spacing:.45px">y_file(r'C:\Users\exampleuser\.ssh\id_r</span><br>sa')</div>
<div class="a th" style="left:673.500px;top:359.500px;width:407px;height:32px">Transport类</div>
<div class="a tb lt" style="left:672.500px;top:390.500px;width:408px;height:32px">tran.connect(username=‘client’, pkey=key)</div>
<div class="a th" style="left:673px;top:441.500px;width:408px;height:33px;border:1.500px solid #43b0d2">SFTPClient类</div>
<div class="a tb" style="left:673px;top:473px;width:408px;height:53px;line-height:21.600px;padding-top:5px">sftp =<br>paramiko.SFTPClient.from_transport(tran)</div>
<div class="a tb" style="left:673px;top:524.500px;width:408px;height:33px">sftp.get(remote_path, local_path)</div>
<div class="a th" style="left:673px;top:558px;width:408px;height:34px;border:1.500px solid #43b0d2;border-radius:2px">Transport类</div>
<div class="a tb lt" style="left:672.500px;top:591px;width:408px;height:31px">tran.close()</div>
</div>

 </div></div>
 <div class="a" style="left:24.500px;top:387.500px;width:346.400px;height:195.200px;border:3px solid #e8875d;border-radius:1px"></div>
 <!-- 27 -->
 <div class="a tw" style="left:24.800px;top:604.300px;box-shadow:inset 0 0 0 1px #9a9a9a"><div class="ts">
  <div class="t" style="left:47px;top:47px;font-size:57px;color:#111">Paramiko常用类简介</div>
  <div class="t" style="left:58px;top:113px;font-size:24px;color:#111;letter-spacing:-.7px">•&nbsp; Channel类：该类用于创建在SSH Transport上的安全通道。</div>
  <div class="t" style="left:58px;top:148px;font-size:24px;color:#111;letter-spacing:-.7px">•&nbsp; Message类：SSH Message是字节流。该类对字符串、整数、bools和无限精度整数（Python中称为long）</div>
  <div class="t" style="left:84px;top:176px;font-size:24px;color:#111;letter-spacing:-.7px">的某些组合进行编码。</div>
 </div></div>
</div>
<div class="t" style="left:-5.500px;top:444px;font-size:19px;color:#8a8a8a;letter-spacing:1px">25</div>
<div class="t" style="left:-5.500px;top:662px;font-size:19px;color:#e08a63;letter-spacing:1px">26</div>
<div class="t" style="left:-5.500px;top:879px;font-size:19px;color:#8a8a8a;letter-spacing:1px">27</div>
<!-- add button -->
<div class="a" style="left:156.500px;top:937px;width:80px;height:34.500px;border-radius:17.500px;background:#333;border:1px solid #4a4a4a"></div>
<svg style="left:188px;top:946px" width="17" height="17" viewBox="0 0 17 17"><path d="M8.500 0v17M0 8.500h17" stroke="#b4b4b4" stroke-width="2.800" fill="none"/></svg>

<div id="split" class="a"></div>
<!-- MAIN -->
<div id="main" class="a"></div>
<div id="slide" class="a"><div class="sl">
<div class="t ttl" style="left:44.500px;top:44.700px">Paramiko<span style="font-size:56px">使用流程图</span></div>
<div class="a fb" style="left:293.500px;top:145px;width:266px;height:55px"><span>实例化SSH会话通道</span></div>
<div class="a fb" style="left:139px;top:256px;width:265px;height:55px"><span>设置口令认证</span></div>
<div class="a fb" style="left:458.500px;top:254.500px;width:265px;height:55px"><span>设置公钥认证</span></div>
<div class="a fb" style="left:297px;top:374px;width:266px;height:55px"><span>建立SSH会话连接</span></div>
<div class="a fb" style="left:297px;top:464.500px;width:266px;height:55px"><span>发送相关指令</span></div>
<div class="a fb" style="left:297px;top:558.500px;width:266px;height:55px"><span>关闭会话通道</span></div>
<svg style="left:0;top:0" width="1225" height="690" viewBox="0 0 1225 690">
<g stroke="#000" stroke-width="2" fill="none">
<path d="M425.200 199.800L277 254"/><path d="M425.200 199.800L606 252.800"/>
<path d="M272.700 311L421 371"/><path d="M607.500 309.700L437 371"/>
<path d="M428.900 429v29"/><path d="M428.900 520v32"/>
</g>
<g fill="#000">
<path d="M272.700 255.500l7.500-6.500l2.800 7.200z"/><path d="M611.500 254.300l-10.200.8l2.200-7.400z"/>
<path d="M428 373.800l-10-1.200l3-7.200z"/><path d="M430 373.800l7-7l2.600 7.400z"/>
<path d="M428.900 464l-3.800-9h7.600z"/><path d="M428.900 558l-3.800-9h7.600z"/>
</g>
<defs>
<linearGradient id="ag" x1="0" x2="1" y1="0" y2="0"><stop offset="0" stop-color="#1e9be0"/><stop offset=".07" stop-color="#3eaee0"/><stop offset=".18" stop-color="#52b8dc"/><stop offset=".33" stop-color="#8dcfe4"/><stop offset=".53" stop-color="#d2eaf3"/><stop offset=".73" stop-color="#ecf5f9"/><stop offset="1" stop-color="#f7fbfd"/></linearGradient>
<path id="ar" d="M0 22L22.500 0v13H68v17.700H22.500V44z" stroke="#e4f2f9" stroke-width="1"/>
</defs>
<use href="#ar" x="594.800" y="153.400" fill="url(#ag)"/>
<use href="#ar" x="732.200" y="258.800" fill="url(#ag)"/>
<use href="#ar" x="594.800" y="380.500" fill="url(#ag)"/>
<use href="#ar" x="594.800" y="464" fill="url(#ag)"/>
<use href="#ar" x="594.800" y="569.800" fill="url(#ag)"/>
</svg>
<!-- tables -->
<div class="a th" style="left:673.500px;top:146px;width:443px;height:32px">Transport类</div>
<div class="a tb" style="left:672.500px;top:177px;width:444px;height:32.500px">tran = paramiko.Transport(('192.168.56.100',22))</div>
<div class="a th" style="left:809.500px;top:245.500px;width:348px;height:34px;border:1.500px solid #43b0d2">Key handling类</div>
<div class="a tb" style="left:809.500px;top:278px;width:348px;height:73px;line-height:21.600px;padding-top:4.200px"><span style="letter-spacing:.1px">key=paramiko.RSAKey.from_private_ke</span><br><span style="letter-spacing:.45px">y_file(r'C:\Users\exampleuser\.ssh\id_r</span><br>sa')</div>
<div class="a th" style="left:673.500px;top:359.500px;width:407px;height:32px">Transport类</div>
<div class="a tb lt" style="left:672.500px;top:390.500px;width:408px;height:32px">tran.connect(username=‘client’, pkey=key)</div>
<div class="a th" style="left:673px;top:441.500px;width:408px;height:33px;border:1.500px solid #43b0d2">SFTPClient类</div>
<div class="a tb" style="left:673px;top:473px;width:408px;height:53px;line-height:21.600px;padding-top:5px">sftp =<br>paramiko.SFTPClient.from_transport(tran)</div>
<div class="a tb" style="left:673px;top:524.500px;width:408px;height:33px">sftp.get(remote_path, local_path)</div>
<div class="a th" style="left:673px;top:558px;width:408px;height:34px;border:1.500px solid #43b0d2;border-radius:2px">Transport类</div>
<div class="a tb lt" style="left:672.500px;top:591px;width:408px;height:31px">tran.close()</div>
</div>
<!-- watermark -->
<svg style="left:262px;top:268px" width="300" height="58" viewBox="0 0 300 58">
<defs><mask id="wmk" maskUnits="userSpaceOnUse" x="0" y="0" width="300" height="58"><rect width="300" height="58" fill="#fff"/>
<g fill="none" stroke="#000" stroke-width="2.200"><path d="M108 10.500H88L78.500 44H103"/><path d="M104 49L114.500 12L122.500 46L133.500 9"/></g>
<g fill="#000" font-family="Liberation Sans,sans-serif" font-style="italic" font-weight="bold">
<text x="11" y="47" font-size="37" textLength="59" lengthAdjust="spacingAndGlyphs">Eng</text>
<text x="137" y="49" font-size="19" textLength="150" lengthAdjust="spacingAndGlyphs">www.EngCN.com</text>
</g></mask></defs>
<g fill="#ee7442" opacity=".62" mask="url(#wmk)" font-family="Liberation Sans,sans-serif" font-style="italic" font-weight="bold">
<path d="M2 53L22 19H74L86 8H137L127 53z"/>
<path d="M136 32H295L289.500 53H127.500z"/>
<path d="M140 27.500h156v1.500h-156z"/>
<text x="143" y="26.500" font-size="25" textLength="153" lengthAdjust="spacingAndGlyphs" stroke="#ee7442" stroke-width="1.100">工程师论坛网</text>
</g>
</svg>
<!-- I-beam cursor -->
<svg style="left:202.500px;top:71px" width="12" height="24" viewBox="0 0 12 24"><path d="M1 1.500c2.500 0 4 1 5 2.500c1-1.500 2.500-2.500 5-2.500M1 22.500c2.500 0 4-1 5-2.500c1 1.500 2.500 2.500 5 2.500M6 4v16M3.500 12.500h5" fill="none" stroke="#fff" stroke-width="3"/><path d="M1 1.500c2.500 0 4 1 5 2.500c1-1.500 2.500-2.500 5-2.500M1 22.500c2.500 0 4-1 5-2.500c1 1.500 2.500 2.500 5 2.500M6 4v16M3.500 12.500h5" fill="none" stroke="#111" stroke-width="1.100"/></svg>
</div>
<div class="a" style="left:470px;top:229px;width:1224.5px;height:2px;background:linear-gradient(#6e6e6e,#b8b8b8)"></div>
<div class="a" style="left:470px;top:229px;width:1.2px;height:690.3px;background:#909090"></div>
<div class="a" style="left:1693px;top:229px;width:1.5px;height:690.3px;background:#a0a0a0"></div>
<div class="a" style="left:470px;top:918.3px;width:1224.5px;height:1px;background:#b0b0b0"></div>
<div class="a" style="left:1760.4px;top:215.6px;width:7px;height:708px;background:#1a1a1a"></div>
<div class="a" style="left:1762px;top:727.5px;width:14px;height:35.5px;border-radius:6px;background:#474747"></div>
<div class="a" style="left:1763.5px;top:227.5px;width:0;height:0;border-left:5.5px solid transparent;border-right:5.5px solid transparent;border-bottom:4.5px solid #4a4a4a"></div>
<div class="a" style="left:1763.5px;top:906px;width:0;height:0;border-left:5.5px solid transparent;border-right:5.5px solid transparent;border-top:4.5px solid #4a4a4a"></div>
<!-- NOTES -->
<div id="notesline" class="a"></div>
<div id="notes" class="a"></div>
<div class="t" style="left:415px;top:948px;font-size:16px;color:#e2e2e2;letter-spacing:.2px">本次课程涉及这四个类的相关方法：Transport类，Key handling类，SSHClient类，SFTPClient类。</div>
<div class="t" style="left:415px;top:967px;font-size:16px;color:#e2e2e2;letter-spacing:.12px">本流程以Paramiko SFTP会话为例。事实上，由于SSHClient类集成了Transport,Channel和SFTPClient类，上述方法都可由SSHClient这一个类实现，SSH会话更是如此。</div>

<!-- STATUS -->
<div id="status" class="a"></div>
<div class="t st" style="left:-2px;font-size:17px;top:994px">幻灯片<span style="font-size:19px;letter-spacing:.700px;line-height:17px"> 26 / 33</span></div>
<div class="t st" style="left:166px;font-size:17px;top:994px">包图主题2</div>
<svg style="left:270px;top:992px" width="20" height="22" viewBox="0 0 20 22"><path d="M10 1.200l8 3v8c0 4-3 7-8 8.500c-5-1.500-8-4.500-8-8.500v-8zM6.500 7.500l7 7M13.500 7.500l-7 7" fill="none" stroke="#9a9a9a" stroke-width="1.500" stroke-linejoin="round"/></svg>
<div class="t st" style="left:298px;font-size:17px;top:994px">文档未保护</div>
<div class="a" style="left:401.500px;top:993.500px;width:19px;height:19px;border-radius:50%;background:#2c7a3e;border:1.500px solid #24592f"></div>
<div class="a" style="left:408px;top:1000px;width:6px;height:6px;border-radius:50%;background:#e8f3ea"></div>
<div class="t st" style="left:428px;font-size:17px;top:994px">本地备份开</div>
<svg style="left:1000px;top:992px" width="22" height="23" viewBox="0 0 22 23"><path d="M11 1.500l9 4.500v8.500M2 6l9 4.500l6-3M11 10.500v11l-9-4.500V6M11 21.500l9-4.500v-3" fill="none" stroke="#9a9a9a" stroke-width="1.500" stroke-linejoin="round"/></svg>
<div class="t st" style="left:1032px;font-size:18px;top:993px">智能美化</div>
<div class="a" style="left:1113px;top:1001px;width:0;height:0;border-left:3.500px solid transparent;border-right:3.500px solid transparent;border-bottom:4.500px solid #a0a0a0"></div>
<svg style="left:1147px;top:993px" width="24" height="20" viewBox="0 0 24 20"><path d="M1 6.500h13M1 12.500h22M1 18.500h22M15.500 4l2.500 2.500l4.500-5" fill="none" stroke="#b0b0b0" stroke-width="1.600"/></svg>
<div class="a" style="left:1183px;top:985px;width:35px;height:34px;background:#353535"></div>
<svg style="left:1190px;top:993px" width="23" height="20" viewBox="0 0 23 20"><rect x="1" y="1" width="21" height="18" rx="1.500" fill="none" stroke="#d0d0d0" stroke-width="1.600"/><path d="M6.500 1v13.500H22M1 14.500h5.500" fill="none" stroke="#d0d0d0" stroke-width="1.600"/></svg>
<svg style="left:1233px;top:993px" width="24" height="20" viewBox="0 0 24 20"><g fill="none" stroke="#b0b0b0" stroke-width="1.600"><rect x="1" y="1" width="8.500" height="7" rx="1"/><rect x="14" y="1" width="8.500" height="7" rx="1"/><rect x="1" y="12" width="8.500" height="7" rx="1"/><rect x="14" y="12" width="8.500" height="7" rx="1"/></g></svg>
<svg style="left:1276px;top:993px" width="23" height="21" viewBox="0 0 23 21"><path d="M11.500 4c-2-2-6-3-10-2.500v14.500c4-.5 8 .5 10 3c2-2.500 6-3.500 10-3V1.500c-4-.5-8 .5-10 2.500zM11.500 4v15" fill="none" stroke="#b0b0b0" stroke-width="1.600" stroke-linejoin="round"/></svg>
<svg style="left:1320px;top:992px" width="24" height="22" viewBox="0 0 24 22"><path d="M4 7V3a1.500 1.500 0 0 1 1.500-1.500h8A1.500 1.500 0 0 1 15 3v2.500M2 20.500v-12h13.500v12zM8 5h4M15.500 9.500h3a3 3 0 0 1 0 6h-3M17 20.500h5" fill="none" stroke="#b0b0b0" stroke-width="1.600" stroke-linejoin="round"/></svg>
<div class="a" style="left:1364.500px;top:990px;width:23px;height:23px;border-radius:50%;background:#f0781e"></div>
<div class="a" style="left:1372.500px;top:995.500px;width:0;height:0;border-top:6px solid transparent;border-bottom:6px solid transparent;border-left:9.500px solid #fff"></div>
<div class="a" style="left:1416.500px;top:999.500px;width:17.500px;height:2px;background:#7a7a7a"></div>
<div class="a" style="left:1444px;top:999.500px;width:184px;height:2px;background:#4c4c4c"></div>
<div class="a" style="left:1516.500px;top:990px;width:20px;height:20px;border-radius:50%;background:#6e6e6e;border:1.500px solid #909090"></div>
<svg style="left:1640px;top:992px" width="18" height="18" viewBox="0 0 18 18"><path d="M9 0v18M0 9h18" stroke="#8a8a8a" stroke-width="2" fill="none"/></svg>
<div class="t st" style="left:1700px;top:992px;font-size:19px;letter-spacing:.300px;color:#8e8e8e">88 %</div>

<!-- WALL -->
<div id="wall" class="a"><svg style="left:0;top:0" width="1767" height="35" viewBox="0 0 1767 35" preserveAspectRatio="none"><defs><filter id="nz" color-interpolation-filters="sRGB" x="0" y="0" width="100%" height="100%"><feTurbulence type="fractalNoise" baseFrequency=".13 .22" numOctaves="3" seed="7" result="n"/><feColorMatrix in="n" type="matrix" values="0 0 0 0 .40  0 0 0 0 .36  0 0 0 0 .39  .9 .9 .9 0 -1.330"/></filter><filter id="nd" color-interpolation-filters="sRGB" x="0" y="0" width="100%" height="100%"><feTurbulence type="fractalNoise" baseFrequency=".03 .09" numOctaves="2" seed="3" result="n"/><feColorMatrix in="n" type="matrix" values="0 0 0 0 .07  0 0 0 0 .06  0 0 0 0 .07  1.2 1.2 0 0 -.9"/></filter><linearGradient id="wg" x1="0" x2="1" y1="0" y2="0"><stop offset="0" stop-color="#261f21"/><stop offset=".3" stop-color="#2a2022"/><stop offset=".65" stop-color="#2c2325"/><stop offset="1" stop-color="#33292c"/></linearGradient><linearGradient id="wr" x1="0" x2="0" y1="0" y2="1"><stop offset=".2" stop-color="#40201a" stop-opacity="0"/><stop offset="1" stop-color="#40201a" stop-opacity=".5"/></linearGradient><linearGradient id="wm" x1="0" x2="1" y1="0" y2="0"><stop offset="0" stop-color="#fff" stop-opacity="0"/><stop offset=".25" stop-color="#fff"/><stop offset=".8" stop-color="#fff"/><stop offset="1" stop-color="#fff" stop-opacity="0"/></linearGradient><mask id="wmk2"><rect x="150" width="1000" height="35" fill="url(#wm)"/></mask></defs><rect width="1767" height="35" fill="url(#wg)"/><rect x="150" width="1000" height="35" fill="url(#wr)" mask="url(#wmk2)"/><rect width="1767" height="35" filter="url(#nd)"/><rect width="1767" height="35" filter="url(#nz)"/></svg>
</div>
</body>
</html>
